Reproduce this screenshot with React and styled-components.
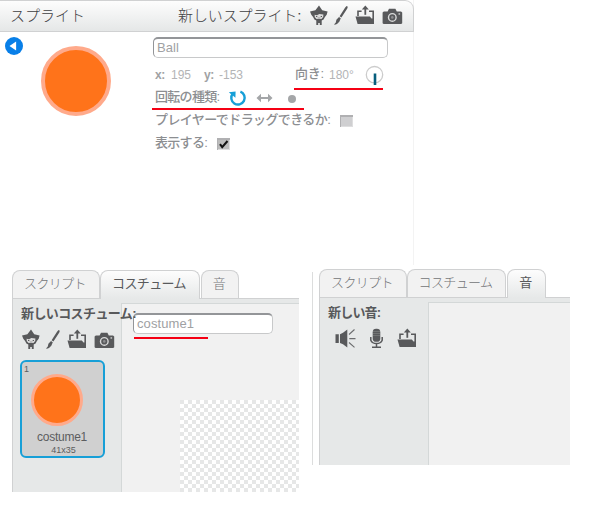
import React from "react";
import styled, { createGlobalStyle, css } from "styled-components";

const App = () => (
  <>
    <GlobalStyle />
    <Page>
      <SpritePanel>
        <SpriteHeader>
          <Title>スプライト</Title>
          <NewSprite>新しいスプライト:</NewSprite>
          <Tools $top={4}>
            <SpriteIcon />
            <BrushIcon />
            <FolderIcon />
            <CameraIcon />
          </Tools>
        </SpriteHeader>
        <SpriteBody>
          <BackButton>
            <svg width="18" height="18" viewBox="0 0 18 18">
              <circle cx="9" cy="9" r="9" fill="#087fe8" />
              <path d="M4.5 9l6.6-4.4v8.8z" fill="#fff" />
            </svg>
          </BackButton>
          <Preview>
            <Ball $size={70} $ring={4} />
          </Preview>
          <Info>
            <NameInput $width={235}>Ball</NameInput>
            <InfoRow $height={24} $top={5}>
              <Label $width={16} $bold>
                x:
              </Label>
              <Value $width={33}>195</Value>
              <Label $width={15} $bold>
                y:
              </Label>
              <Value $width={76}>-153</Value>
              <Label $width={34} $spacing="-0.2px">
                向き:
              </Label>
              <Value $width={35}>180°</Value>
              <Dial />
              <RedLine $left={141} $top={25} $width={89} />
            </InfoRow>
            <InfoRow $height={22}>
              <Label $width={73} $spacing="-0.7px">
                回転の種類:
              </Label>
              <RotateIcon />
              <FlipIcon />
              <Dot />
              <RedLine $left={-1} $top={21} $width={152} />
            </InfoRow>
            <InfoRow $height={23}>
              <Label $width={186} $spacing="-0.6px">
                プレイヤーでドラッグできるか:
              </Label>
              <CheckBox />
            </InfoRow>
            <InfoRow $height={23}>
              <Label $width={63} $spacing="-0.7px">
                表示する:
              </Label>
              <CheckBox $checked>
                <svg width="13" height="12" viewBox="0 0 13 12">
                  <path
                    d="M3 6.2l2.2 3L10.5 3"
                    fill="none"
                    stroke="#111"
                    strokeWidth="2"
                  />
                </svg>
              </CheckBox>
            </InfoRow>
          </Info>
        </SpriteBody>
      </SpritePanel>

      <Editors>
        <CostumeEditor>
          <Tabs>
            <Tab $width={88}>スクリプト</Tab>
            <Tab $width={100} $active>
              コスチューム
            </Tab>
            <Tab $width={38} $gap={1}>
              音
            </Tab>
          </Tabs>
          <Content $height={194}>
            <Side>
              <SideTitle $left={9} $spacing="-0.6px">
                新しいコスチューム:
              </SideTitle>
              <Tools $left={8} $top={5}>
                <SpriteIcon />
                <BrushIcon />
                <FolderIcon />
                <CameraIcon />
              </Tools>
              <Thumb>
                <Index>1</Index>
                <Ball $size={52} $ring={3} />
                <CostumeName>costume1</CostumeName>
                <CostumeSize>41x35</CostumeSize>
              </Thumb>
            </Side>
            <Canvas>
              <NameInput $width={140}>costume1</NameInput>
              <RedLine $left={12} $top={33} $width={74} />
              <Checker />
            </Canvas>
          </Content>
        </CostumeEditor>

        <SoundEditor>
          <Tabs>
            <Tab $width={88}>スクリプト</Tab>
            <Tab $width={99}>コスチューム</Tab>
            <Tab $width={39} $gap={1} $active>
              音
            </Tab>
          </Tabs>
          <Content $height={168}>
            <Side>
              <SideTitle $left={9} $spacing="-0.8px">
                新しい音:
              </SideTitle>
              <SoundTools>
                <SpeakerIcon />
                <MicIcon />
                <FolderIcon />
              </SoundTools>
            </Side>
            <Canvas />
          </Content>
        </SoundEditor>
      </Editors>
    </Page>
  </>
);

export default App;

const SpriteIcon = () => (
  <svg width="20" height="21" viewBox="0 0 20 21">
    <path
      d="M10 0.5L13.2 5.2L18.6 6.4L17.7 9.8L15.9 12L14.6 14.4L12.7 15.6V20H10.8V18H9.2V20H7.3V15.6L5.4 14.4L4.1 12L2.3 9.8L1 6.4L6.4 5.2Z"
      fill="#58595b"
    />
    <path
      d="M5.6 9.8L8 10.2L10.3 9L14.4 9.6L14.2 12L12.4 13.9H7.6L5.8 12.2Z"
      fill="#dcdcdc"
    />
    <path
      d="M7 10.9h1.3v1.1H7zM11.7 10.9H13V12h-1.3zM8.6 12.8h2.9v.5H8.6z"
      fill="#58595b"
    />
  </svg>
);

const BrushIcon = () => (
  <svg width="16" height="21" viewBox="0 0 16 21">
    <path
      d="M13.6 0.9L14.8 1.7L14.3 3.6L8.4 12.6L6.6 11.2L12.2 2.5ZM6 11.9L7.8 13.3L6.3 16.7L4 18.9L1.2 20L1.7 18.8L2.8 17.5L3.4 14.8Z"
      fill="#58595b"
    />
  </svg>
);

const FolderIcon = () => (
  <svg width="20" height="21" viewBox="0 0 20 21">
    <path d="M0.5 11.4H14.8L16.5 13.5H19V19H2.6Z" fill="#58595b" />
    <path
      d="M3 11V6.3H6.6M14 6.3H18.2V14"
      fill="none"
      stroke="#58595b"
      strokeWidth="1.6"
    />
    <path d="M10.3 9.8V3" stroke="#58595b" strokeWidth="1.8" />
    <path d="M6.8 4.4L10.3 0.4L13.8 4.4Z" fill="#58595b" />
  </svg>
);

const CameraIcon = () => (
  <CameraSvg width="21" height="21" viewBox="0 0 21 21">
    <path
      d="M1.8 6.5H5.6L7 3.8H13.4L14.8 6.5H19L20.2 7.5V18.2L19.2 19H1.6L.6 18.2V7.5Z"
      fill="#58595b"
    />
    <circle
      cx="10.3"
      cy="12.4"
      r="3.8"
      fill="none"
      stroke="#d9dada"
      strokeWidth="1.4"
    />
    <circle cx="10.3" cy="12.4" r="1.3" fill="#8d8e90" />
    <path d="M16.5 8.3h1.6v1.3h-1.6z" fill="#d9dada" />
  </CameraSvg>
);

const SpeakerIcon = () => (
  <svg width="21" height="21" viewBox="0 0 21 21">
    <path
      d="M0.5 6.2H3.8V15H.5ZM5 6.2L8 4.8L12.3 1.5V19.5L8 16.2L5 15Z"
      fill="#58595b"
    />
    <path
      d="M14 6.5L19.5 1.5M14.3 10.6H20.5M14 14.5L19.5 19.3"
      stroke="#6c6d6f"
      strokeWidth="1.1"
    />
  </svg>
);

const MicIcon = () => (
  <svg width="15" height="21" viewBox="0 0 15 21">
    <rect x="3.7" y="0.8" width="7.6" height="13" rx="3.4" fill="#58595b" />
    <path d="M4 3.5h7M4 5.5h7M4 7.5h7" stroke="#858687" strokeWidth="0.6" />
    <path
      d="M1.8 9V12.2Q3.2 15.5 7.5 15.5T13.2 12.2V9M7.5 16V19M3 19.2H12"
      fill="none"
      stroke="#58595b"
      strokeWidth="1.5"
    />
  </svg>
);

const RotateIcon = () => (
  <svg width="20" height="20" viewBox="0 0 20 20">
    <path
      d="M12.4 3.6A6.7 6.7 0 1 1 4.8 5.6"
      fill="none"
      stroke="#179fd7"
      strokeWidth="2.4"
    />
    <path d="M.8 4.2L7.6 3.6L7.4 9.8Z" fill="#179fd7" />
  </svg>
);

const FlipIcon = () => (
  <FlipSvg width="17" height="10" viewBox="0 0 17 10">
    <path d="M0.5 5L5 0.8V3.9H12V0.8L16.5 5L12 9.2V6.1H5V9.2Z" fill="#a4a6a8" />
  </FlipSvg>
);

const Dial = () => (
  <svg width="20" height="20" viewBox="0 0 20 20">
    <circle
      cx="10.5"
      cy="9.7"
      r="8.2"
      fill="#fff"
      stroke="#ccc"
      strokeWidth="1.3"
    />
    <path d="M11 8.5V20" stroke="#075e7d" strokeWidth="2.6" />
  </svg>
);

const GlobalStyle = createGlobalStyle`
  body {
    margin: 0;
    background: #fff;
    font-family: "Liberation Sans", "Noto Sans CJK JP", sans-serif;
  }

  * {
    box-sizing: border-box;
  }

  svg {
    display: block;
    flex: none;
  }
`;

const raised = css`
  background: linear-gradient(#fdfdfd, #e5e7e7);
`;

const Page = styled.div`
  width: 600px;
  height: 516px;
  overflow: hidden;
`;

const SpritePanel = styled.section`
  width: 414px;
  height: 265px;
  border-right: 1px solid #f3f3f3;
`;

const SpriteHeader = styled.header`
  ${raised}
  display: flex;
  width: 414px;
  height: 32px;
  border: 1px solid #d0d1d2;
  border-left: 0;
  border-radius: 0 9px 0 0;
  color: #3f4042;
  font-size: 15px;
  line-height: 30px;
  white-space: nowrap;
`;

const Title = styled.h1`
  width: 178px;
  margin: 0;
  padding-left: 10px;
  font-size: 15px;
  font-weight: 300;
`;

const NewSprite = styled.div`
  width: 131px;
  font-weight: 300;
  letter-spacing: -0.1px;
`;

const Tools = styled.div`
  display: flex;
  gap: 6px;
  padding: ${(props) => props.$top}px 0 0 ${(props) => props.$left || 0}px;

  svg:nth-child(1) {
    margin-right: -2px;
  }
`;

const CameraSvg = styled.svg`
  margin-left: 1px;
`;

const SpriteBody = styled.div`
  display: flex;
`;

const BackButton = styled.div`
  width: 41px;
  padding: 5px 0 0 5px;
`;

const Preview = styled.div`
  width: 112px;
  padding-top: 14px;
`;

const Ball = styled.div`
  width: ${(props) => props.$size}px;
  height: ${(props) => props.$size}px;
  border: ${(props) => props.$ring}px solid #ffaa8b;
  border-radius: 50%;
  background: #ff731a;
`;

const Info = styled.div`
  padding-top: 5px;
`;

const NameInput = styled.div`
  width: ${(props) => props.$width}px;
  height: 21px;
  padding-left: 3px;
  border: 1px solid #c8c9ca;
  border-top: 2px solid #939598;
  border-left-color: #939598;
  border-radius: 5px;
  background: #fff;
  color: #a0a1a3;
  font-size: 13px;
  line-height: 18px;
  letter-spacing: 0.1px;
`;

const InfoRow = styled.div`
  position: relative;
  display: flex;
  align-items: center;
  height: ${(props) => props.$height}px;
  margin-top: ${(props) => props.$top || 0}px;
  padding-left: 2px;
  white-space: nowrap;
`;

const Label = styled.span`
  width: ${(props) => props.$width}px;
  margin-top: ${(props) => (props.$bold ? 0 : -2)}px;
  color: ${(props) => (props.$bold ? "#a0a2a4" : "#8c8e91")};
  font-size: ${(props) => (props.$bold ? 12 : 13)}px;
  font-weight: ${(props) => (props.$bold ? 700 : 500)};
  line-height: 20px;
  letter-spacing: ${(props) => props.$spacing || "-0.4px"};
`;

const Value = styled.span`
  width: ${(props) => props.$width}px;
  color: #b3b4b6;
  font-size: 12px;
  line-height: 20px;
`;

const RedLine = styled.div`
  position: absolute;
  left: ${(props) => props.$left}px;
  top: ${(props) => props.$top}px;
  width: ${(props) => props.$width}px;
  height: 2px;
  background: #f50014;
`;

const FlipSvg = styled.svg`
  margin-left: 8px;
`;

const Dot = styled.div`
  width: 8px;
  height: 8px;
  margin: 1px 0 0 15px;
  border-radius: 50%;
  background: #a4a6a8;
`;

const CheckBox = styled.div`
  width: 13px;
  height: 12px;
  margin-left: -1px;
  background: ${(props) => (props.$checked ? "#bcbcbc" : "#cfcfd1")};
  box-shadow: inset 1px 2px 0 #b0b0b2, inset -1px -1px 0 #dededf;
`;

const Editors = styled.div`
  display: flex;
  align-items: flex-start;
  padding-top: 4px;
`;

const CostumeEditor = styled.section`
  width: 299px;
  padding: 1px 0 0 12px;
`;

const SoundEditor = styled.section`
  width: 258px;
  margin-left: 13px;
  padding-left: 6px;
  border-style: solid;
  border-image: linear-gradient(transparent 4px, #dcdddd 4px) 1;
  border-width: 0 0 0 1px;
`;

const Tabs = styled.div`
  display: flex;
  height: 28px;
`;

const Tab = styled.div`
  position: relative;
  z-index: 1;
  width: ${(props) => props.$width}px;
  height: ${(props) => (props.$active ? 29 : 28)}px;
  margin-left: ${(props) => props.$gap || 0}px;
  padding-right: 2px;
  border: 1px solid #d0d1d2;
  border-bottom: 0;
  border-radius: 8px 8px 0 0;
  background: ${(props) =>
    props.$active ? "linear-gradient(#fdfdfd, #e6e8e8)" : "#f2f2f2"};
  color: ${(props) => (props.$active ? "#58595b" : "#737578")};
  font-size: 13px;
  font-weight: ${(props) => (props.$active ? 400 : 300)};
  line-height: 25px;
  letter-spacing: -0.6px;
  text-align: center;
  white-space: nowrap;
`;

const Content = styled.div`
  display: flex;
  height: ${(props) => props.$height}px;
  border: solid #d0d1d2;
  border-width: 1px 0 0 1px;
  background: #e6e8e8;
`;

const Side = styled.div`
  width: 108px;
  padding-top: 5px;
`;

const SideTitle = styled.h2`
  position: relative;
  z-index: 1;
  margin: 0;
  padding-left: ${(props) => props.$left - 1}px;
  color: #58595b;
  font-size: 13px;
  font-weight: 700;
  line-height: 20px;
  letter-spacing: ${(props) => props.$spacing || "-0.3px"};
  white-space: nowrap;
`;

const SoundTools = styled.div`
  display: flex;
  padding: 5px 0 0 15px;

  svg + svg {
    margin-left: 13px;
  }
`;

const Thumb = styled.div`
  display: flex;
  flex-direction: column;
  width: 85px;
  height: 98px;
  margin: 10px 0 0 7px;
  padding-left: 9px;
  border: 2px solid #179fd7;
  border-radius: 6px;
  background: #d0d0d0;
  color: #5c5d5f;
`;

const Index = styled.span`
  height: 12px;
  margin-left: -7px;
  font-size: 9px;
  line-height: 15px;
`;

const CostumeName = styled.span`
  height: 19px;
  margin-left: -10px;
  font-size: 12px;
  line-height: 22px;
  letter-spacing: -0.25px;
  text-align: center;
`;

const CostumeSize = styled.span`
  margin-left: -7px;
  font-size: 9px;
  line-height: 10px;
  text-align: center;
`;

const Canvas = styled.div`
  position: relative;
  display: flex;
  flex: 1;
  flex-direction: column;
  justify-content: space-between;
  margin-top: 4px;
  padding: 9px 0 0 11px;
  border: solid #d4d8d8;
  border-width: 1px 0 0 1px;
  background: #f1f1f1;
`;

const Checker = styled.div`
  align-self: flex-end;
  width: 119px;
  height: 92px;
  background: repeating-conic-gradient(#fff 0 25%, #e6e7e7 0 50%) 0 0 / 8px 8px;
`;
